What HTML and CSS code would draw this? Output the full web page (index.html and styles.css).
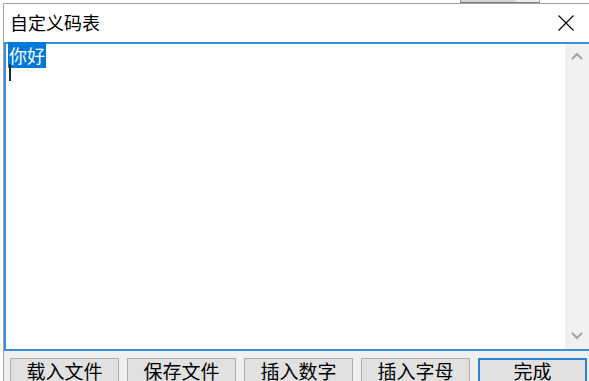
FILE: index.html
```html
<!DOCTYPE html>
<html lang="zh-CN">
<head>
  <meta charset="UTF-8">
  <title>自定义码表</title>
  <link rel="stylesheet" href="styles.css">
</head>
<body>
  <div class="behind"></div>
  <div class="window">
    <div class="titlebar">
      <span class="title">自定义码表</span>
      <svg class="close" width="16" height="16" viewBox="0 0 16 16">
        <path d="M0.5 0.5 L15.5 15.5 M15.5 0.5 L0.5 15.5" stroke="#000" stroke-width="1.1" fill="none"/>
      </svg>
    </div>

    <div class="editor">
      <div class="text-area">
        <div class="line"><span class="selected">你好</span></div>
        <div class="line"><span class="caret"></span></div>
      </div>
      <div class="scrollbar">
        <svg width="12" height="8" viewBox="0 0 12 8">
          <path d="M1 7 L6 2 L11 7" stroke="#a6a6a6" stroke-width="2.2" fill="none"/>
        </svg>
        <svg width="12" height="8" viewBox="0 0 12 8">
          <path d="M1 1 L6 6 L11 1" stroke="#a6a6a6" stroke-width="2.2" fill="none"/>
        </svg>
      </div>
    </div>

    <div class="btn-area">
      <button class="dlg-btn">载入文件</button>
      <button class="dlg-btn">保存文件</button>
      <button class="dlg-btn">插入数字</button>
      <button class="dlg-btn">插入字母</button>
      <button class="dlg-btn default">完成</button>
    </div>
  </div>
</body>
</html>
```

FILE: styles.css
```css
* {
  margin: 0;
  padding: 0;
  box-sizing: border-box;
  font-family: "Noto Sans CJK SC", "Noto Sans", sans-serif;
}

body {
  width: 589px;
  height: 381px;
  overflow: hidden;
  background: #fff;
  position: relative;
}

.behind {
  position: absolute;
  top: 0;
  left: 460px;
  width: 80px;
  height: 3px;
  background: linear-gradient(90deg, #d6d6d6 70%, #ececec 70%);
  border-left: 1px solid #8c8c8c;
  border-right: 1px solid #b0b0b0;
  border-bottom: 1px solid #7a7a7a;
}

.window {
  margin: 3px 0 0 3px;
  width: 588px;
  height: 378px;
  overflow: hidden;
  border-top: 1px solid #a3a3a3;
  border-left: 1px solid #a3a3a3;
  background: #f0f0f0;
}

.titlebar {
  height: 38px;
  background: #fff;
  display: flex;
  align-items: center;
  padding: 0 17px 0 6px;
}

.title {
  font-size: 18px;
  color: #000;
  line-height: 20px;
  padding-bottom: 3px;
}

.close {
  margin-left: auto;
  margin-bottom: 1px;
}

.editor {
  height: 309px;
  border: 2px solid #3a8ee0;
  background: #fff;
  display: flex;
}

.text-area {
  flex: 1;
  padding: 3px 0 0 2px;
}

.line {
  height: 17px;
  font-size: 18px;
  line-height: 17px;
  color: #000;
}

.selected {
  background: #0078d7;
  color: #fff;
  padding: 0 1px;
}

.caret {
  display: inline-block;
  width: 2px;
  height: 17px;
  margin-left: 1px;
  background: #222;
  vertical-align: top;
}

.scrollbar {
  width: 24px;
  background: #f0f0f0;
  display: flex;
  flex-direction: column;
  justify-content: space-between;
  align-items: center;
  padding: 8px 0 9px;
}

.btn-area {
  display: flex;
  gap: 8px;
  padding: 7px 0 0 6px;
}

.dlg-btn {
  width: 109px;
  height: 34px;
  border: 1px solid #adadad;
  background: #e1e1e1;
  font-size: 19px;
  line-height: 21px;
  padding-bottom: 9px;
  color: #000;
}

.dlg-btn.default {
  border: 2px solid #2a84dc;
}
```
